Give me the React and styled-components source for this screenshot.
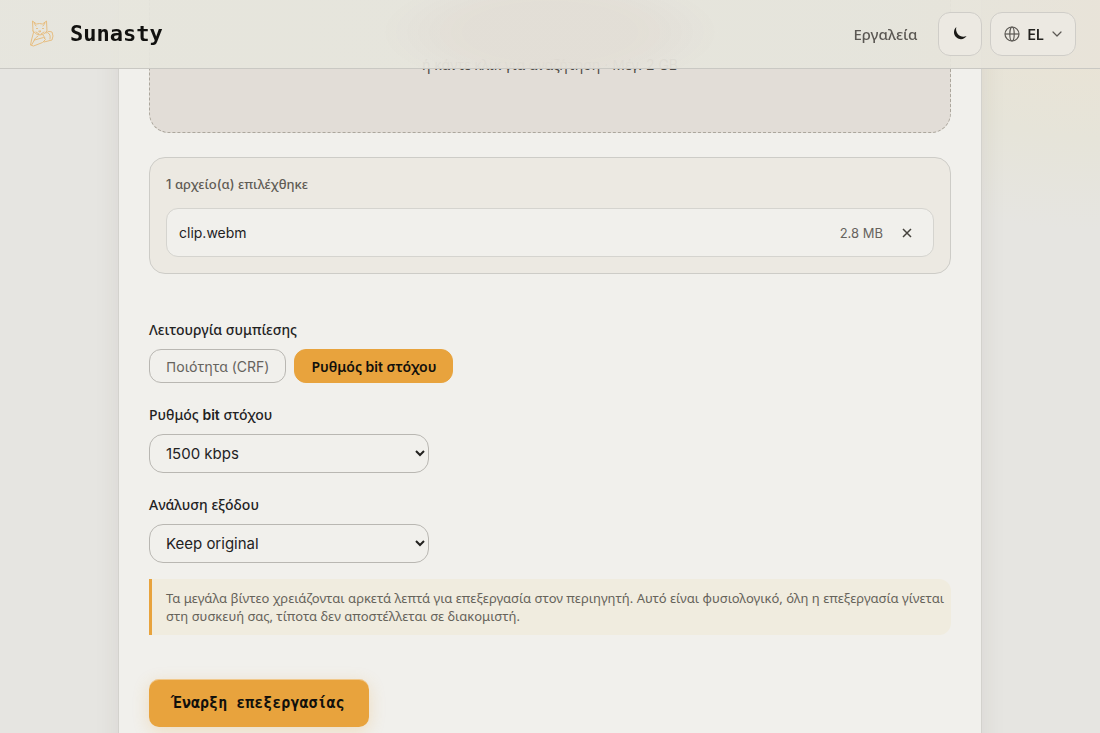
import React, { useState } from "react"
import styled, { createGlobalStyle } from "styled-components"

const GlobalStyle = createGlobalStyle`
    *, *::before, *::after {
        box-sizing: border-box;
    }
    body {
        margin: 0;
        color: #23221f;
        font-family: "Noto Sans", sans-serif;
        font-size: 14px;
        line-height: 20px;
        background: radial-gradient(ellipse 360px 230px at 100% 0, #ebe3d4, #e6e4d9 60%, rgba(230, 229, 225, 0)) #e6e5e1;
    }
    button, select {
        font-family: inherit;
        color: inherit;
        cursor: pointer;
    }
`

const Latin = styled.span`
    font-family: Inter, sans-serif;
`

/* header */
const Header = styled.header`
    position: fixed;
    top: 0;
    left: 0;
    right: 0;
    z-index: 10;
    height: 69px;
    padding: 0 24px;
    display: flex;
    align-items: center;
    justify-content: space-between;
    border-bottom: 1px solid #c9c8c3;
    background:
        radial-gradient(ellipse 170px 60px at 50% 32px, rgba(224, 218, 210, 0.6) 50%, rgba(224, 218, 210, 0)),
        linear-gradient(90deg, rgba(230, 229, 221, 0.95), rgba(229, 228, 220, 0.95) 80%, rgba(232, 227, 217, 0.95));
`
const Brand = styled.a`
    display: flex;
    align-items: center;
    gap: 10px;
    color: #11110f;
    text-decoration: none;
    font-family: "DejaVu Sans Mono", monospace;
    font-size: 22px;
    font-weight: 700;
    line-height: 28px;
`
const Nav = styled.nav`
    display: flex;
    align-items: center;
    gap: 8px;
`
const NavLink = styled.a`
    margin-right: 12px;
    color: #5b5853;
    font-weight: 500;
    font-size: 15px;
    text-decoration: none;
`
const HeaderButton = styled.button`
    height: 44px;
    min-width: 44px;
    padding: 0 13px;
    display: flex;
    align-items: center;
    justify-content: center;
    gap: 8px;
    border: 1px solid #cfcdc8;
    border-radius: 12px;
    background: #ece9e2;
    font-size: 14px;
    font-weight: 600;
`

/* page */
const Card = styled.main`
    width: calc(100% - 32px);
    max-width: 864px;
    min-height: 100vh;
    margin: 0 auto;
    padding: 0 30px 32px;
    border: solid #d3d2cd;
    border-width: 0 1px;
    background: #f1f0ec;
    box-shadow: 0 8px 24px rgba(60, 55, 40, 0.08);
`
const DropZone = styled.div`
    height: 133px;
    padding-bottom: 57px;
    display: flex;
    align-items: flex-end;
    justify-content: center;
    border: 1px dashed #aca79d;
    border-top: 0;
    border-radius: 0 0 20px 20px;
    background: #e2ddd7;
    color: #4d4a45;
    white-space: pre;
`
const FileBox = styled.section`
    margin-top: 24px;
    padding: 16px;
    border: 1px solid #cdccc7;
    border-radius: 16px;
    background: #ece9e2;
`
const FileCount = styled.h2`
    margin: 0 0 14px;
    color: #5f5b54;
    font-size: 13px;
    font-weight: 500;
    line-height: 20px;
`
const FileRow = styled.div`
    height: 49px;
    padding: 0 10px 0 12px;
    display: flex;
    align-items: center;
    gap: 8px;
    border: 1px solid #d5d4cf;
    border-radius: 12px;
    background: #f1f0ec;
    font-family: Inter, sans-serif;
`
const FileName = styled.span`
    flex: 1;
`
const FileSize = styled.span`
    color: #66635d;
    font-size: 13px;
`
const RemoveButton = styled.button`
    width: 32px;
    height: 32px;
    padding: 0;
    display: grid;
    place-items: center;
    border: 0;
    background: none;
`

const Field = styled.div`
    margin-top: ${(props) => props.$top}px;
`
const Label = styled.label`
    display: block;
    margin-bottom: 9px;
    font-weight: 500;

    ${Latin} {
        font-weight: 600;
    }
`
const Modes = styled.div`
    display: flex;
    gap: 8px;
`
const ModeButton = styled.button`
    height: 34px;
    padding: 0 16px;
    border: 1px solid ${(props) => (props.$active ? "#e8a33d" : "#b9b7b2")};
    border-radius: 12px;
    background: ${(props) => (props.$active ? "#e8a33d" : "transparent")};
    color: ${(props) => (props.$active ? "#11100c" : "#66635d")};
    font-size: 14px;
    font-weight: ${(props) => (props.$active ? 600 : 400)};
`
const Select = styled.select`
    display: block;
    width: 280px;
    max-width: 100%;
    height: 39px;
    padding: 0 12px;
    border: 1px solid #b9b7b2;
    border-radius: 14px;
    background: #f1f0ec;
    font-family: Inter, sans-serif;
    font-size: 15px;
`
const Note = styled.p`
    margin: 16px 0 0;
    padding: 10px 4px 10px 14px;
    border-left: 3px solid #e8a33d;
    border-radius: 0 12px 12px 0;
    background: #f0ecdf;
    color: #66635a;
    font-size: 13px;
    line-height: 18px;
`
const StartButton = styled.button`
    height: 48px;
    margin-top: 44px;
    padding: 0 24px;
    border: 0;
    border-radius: 10px;
    background: #e8a33d;
    box-shadow: 0 4px 16px rgba(232, 163, 61, 0.25), inset 0 1px 0 rgba(255, 255, 255, 0.4);
    color: #11100c;
    font-family: "DejaVu Sans Mono", monospace;
    font-size: 15px;
    font-weight: 700;
`

function CatLogo() {
    return (
        <svg width="36" height="36" viewBox="0 0 36 36" fill="none" stroke="#e6bd80" strokeWidth="1" strokeLinecap="round" strokeLinejoin="round" aria-hidden="true">
            <path d="M9 15 8.500 5l4 3q3-1 6 0l4-3 .5 10q-3 4-7 4t-7-4Z" />
            <path d="m10 7 2 3m9-3-2 3M12.500 12.500h1m5 0h1M15 15h2l-1 1zM12 16l3 2m5-2-3 2" />
            <path d="M9.500 16.500 7.500 24l-1 5 3 1 9-3.500 3-3-2-2-9 2.500-3 5" />
            <path d="M22 17q3-3 6-1 2 4 0 8l-8 2M24 17q3 1 2 6M14 20q-3 2-4 4M19 19l2 3" />
        </svg>
    )
}

function MoonIcon() {
    return (
        <svg width="16" height="16" viewBox="0 0 16 16" aria-hidden="true">
            <path d="M4.300 1C1 4 1.400 9 4.600 11.600c3.200 2.500 7.800 1.900 10-1.600-3.300 1.400-6.700.6-8.700-1.800C4.200 6.200 3.700 3.600 4.300 1Z" fill="#1b1a17" />
        </svg>
    )
}

function GlobeIcon() {
    return (
        <svg width="16" height="16" viewBox="0 0 16 16" fill="none" stroke="#5b5853" strokeWidth="1.200" aria-hidden="true">
            <circle cx="8" cy="8" r="7" />
            <ellipse cx="8" cy="8" rx="2.200" ry="7" />
            <path d="M1 8h14" />
        </svg>
    )
}

function ChevronIcon() {
    return (
        <svg width="10" height="10" viewBox="0 0 10 10" fill="none" stroke="#5b5853" strokeWidth="1.200" strokeLinecap="round" strokeLinejoin="round" aria-hidden="true">
            <path d="m1 3 4 4 4-4" />
        </svg>
    )
}

function CloseIcon() {
    return (
        <svg width="10" height="10" viewBox="0 0 10 10" stroke="#45423d" strokeWidth="1.500" aria-hidden="true">
            <path d="m1 1 8 8M9 1 1 9" />
        </svg>
    )
}

export default function App() {
    const [mode, setMode] = useState("bitrate")

    return (
        <>
            <GlobalStyle />
            <Header>
                <Brand href="#">
                    <CatLogo />
                    Sunasty
                </Brand>
                <Nav>
                    <NavLink href="#tools">Εργαλεία</NavLink>
                    <HeaderButton type="button" aria-label="Σκούρο θέμα"><MoonIcon /></HeaderButton>
                    <HeaderButton type="button" aria-haspopup="listbox">
                        <GlobeIcon />
                        <Latin>EL</Latin>
                        <ChevronIcon />
                    </HeaderButton>
                </Nav>
            </Header>
            <Card>
                <DropZone>ή κάντε κλικ για αναζήτηση<Latin> · </Latin>Μέγ.<Latin> 2 GB</Latin></DropZone>
                <FileBox>
                    <FileCount><Latin>1 </Latin>αρχείο<Latin>(</Latin>α<Latin>)</Latin> επιλέχθηκε</FileCount>
                    <FileRow>
                        <FileName>clip.webm</FileName>
                        <FileSize>2.8 MB</FileSize>
                        <RemoveButton type="button" aria-label="Αφαίρεση"><CloseIcon /></RemoveButton>
                    </FileRow>
                </FileBox>
                <Field $top={46}>
                    <Label as="div" id="mode-label">Λειτουργία συμπίεσης</Label>
                    <Modes role="group" aria-labelledby="mode-label">
                        <ModeButton type="button" $active={mode === "crf"} onClick={() => setMode("crf")}>
                            Ποιότητα <Latin>(CRF)</Latin>
                        </ModeButton>
                        <ModeButton type="button" $active={mode === "bitrate"} onClick={() => setMode("bitrate")}>
                            Ρυθμός <Latin>bit</Latin> στόχου
                        </ModeButton>
                    </Modes>
                </Field>
                <Field $top={22}>
                    <Label htmlFor="bitrate">Ρυθμός <Latin>bit</Latin> στόχου</Label>
                    <Select id="bitrate" defaultValue="1500">
                        <option value="1000">1000 kbps</option>
                        <option value="1500">1500 kbps</option>
                        <option value="2500">2500 kbps</option>
                    </Select>
                </Field>
                <Field $top={22}>
                    <Label htmlFor="resolution">Ανάλυση εξόδου</Label>
                    <Select id="resolution" defaultValue="keep">
                        <option value="keep">Keep original</option>
                        <option value="1080">1080p</option>
                        <option value="720">720p</option>
                    </Select>
                </Field>
                <Note>
                    Τα μεγάλα βίντεο χρειάζονται αρκετά λεπτά για επεξεργασία στον περιηγητή. Αυτό είναι φυσιολογικό, όλη η επεξεργασία γίνεται στη συσκευή σας, τίποτα δεν αποστέλλεται σε διακομιστή.
                </Note>
                <StartButton type="button">Έναρξη επεξεργασίας</StartButton>
            </Card>
        </>
    )
}
